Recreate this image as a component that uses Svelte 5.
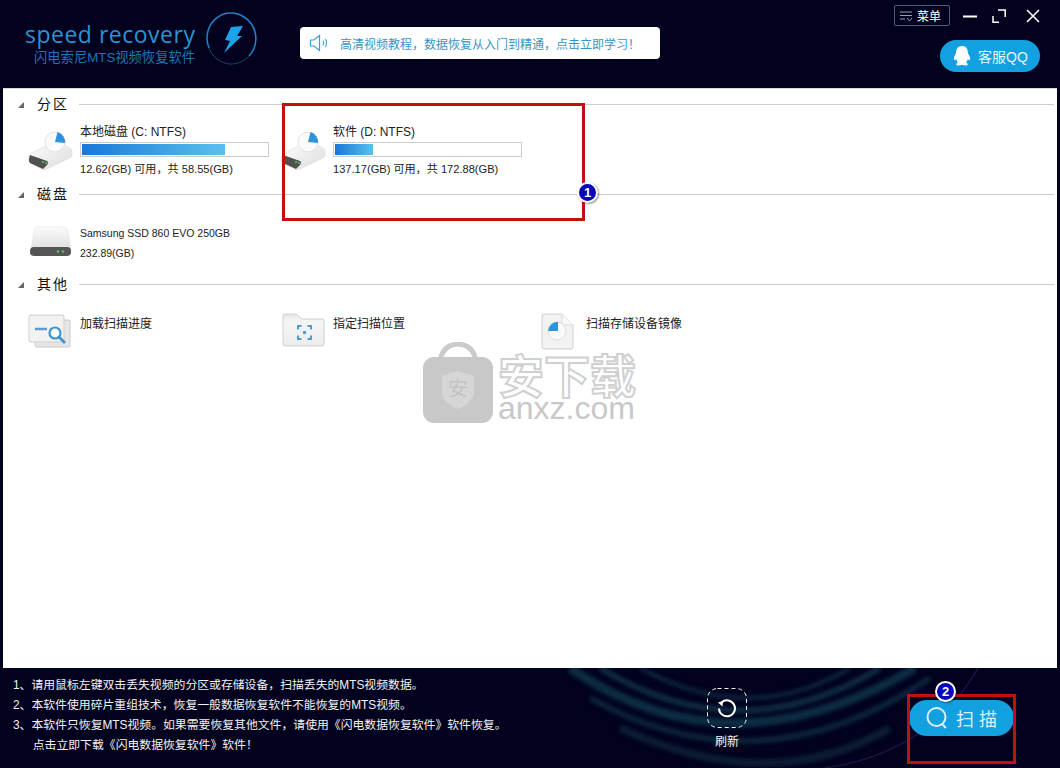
<script>
  // full-width punctuation, as in the original UI
  const comma = "\uFF0C";
  const bang = "\uFF01";
  const volumes = [
    { name: "本地磁盘 (C: NTFS)", used: 77.5, info: `12.62(GB) 可用${comma}共 58.55(GB)` },
    { name: "软件 (D: NTFS)", used: 20.6, info: `137.17(GB) 可用${comma}共 172.88(GB)` },
  ];
  const notes = [
    `1、请用鼠标左键双击丢失视频的分区或存储设备${comma}扫描丢失的MTS视频数据。`,
    `2、本软件使用碎片重组技术${comma}恢复一般数据恢复软件不能恢复的MTS视频。`,
    `3、本软件只恢复MTS视频。如果需要恢复其他文件${comma}请使用《闪电数据恢复软件》软件恢复。`,
    `      点击立即下载《闪电数据恢复软件》软件${bang}`,
  ];
  const tip = `高清视频教程${comma}数据恢复从入门到精通${comma}点击立即学习${bang}`;
</script>

<div class="app">
  <header>
    <div class="logo">
      <div class="brand">
        <div class="word">speed recovery</div>
        <div class="sub">闪电索尼MTS视频恢复软件</div>
      </div>
      <svg class="mark" width="54" height="56" viewBox="0 0 54 56" fill="none">
        <path d="M3 36A24 25 0 0 1 38 5A24 25 0 0 1 43 44" stroke="#1f7fc0" stroke-width="1.600" />
        <path d="M43 44A24 25 0 0 1 3 36" stroke="#24405e" stroke-width="1" />
        <path d="M25 15L37 14L31 24L36 24L18 41L24 29L19 28Z" fill="#1ba3ea" />
      </svg>
    </div>
    <div class="banner">
      <svg width="22" height="18" viewBox="0 0 22 18" fill="none" stroke="#3a9fd0">
        <path d="M1.500 6H5L10.500 1.500V16.500L5 12H1.500Z" stroke-width="1.200" />
        <path d="M14 6.500Q15.500 9 14 11.500M16.500 5Q18.500 9 16.500 13" stroke-width="1.100" />
      </svg>
      <span>{tip}</span>
    </div>
    <div class="right">
      <div class="controls">
        <div class="menu">
          <svg width="15" height="12" viewBox="0 0 15 12" fill="none" stroke="#9a9db0">
            <path d="M1 2H13M1 5.500H13M1 9H6" />
            <path d="M8 8L10.500 11L13 8" />
          </svg>
          <span>菜单</span>
        </div>
        <svg class="min" width="14" height="14" viewBox="0 0 14 14"><path d="M0 7.500H14" stroke="#fff" stroke-width="2" /></svg>
        <svg class="max" width="14" height="14" viewBox="0 0 14 14" fill="none" stroke="#fff" stroke-width="1.500">
          <path d="M6 1H13.200V8M1 7V13.200H7" />
        </svg>
        <svg class="close" width="14" height="14" viewBox="0 0 14 14" stroke="#fff" stroke-width="1.600">
          <path d="M1 1L13 13M13 1L1 13" />
        </svg>
      </div>
      <div class="qq">
        <svg width="20" height="22" viewBox="0 0 20 22">
          <path d="M10 1C5.500 1 4 4.500 4 8.500C2.500 10.500 1.500 13 2 15C3 15.500 3.800 14.500 4.200 14C4.500 15.500 5 16.500 6 17.400C4.500 18 4 19 4.500 20C6 21 8.500 20.500 10 19.800C11.500 20.500 14 21 15.500 20C16 19 15.500 18 14 17.400C15 16.500 15.500 15.500 15.800 14C16.200 14.500 17 15.500 18 15C18.500 13 17.500 10.500 16 8.500C16 4.500 14.500 1 10 1Z" fill="#fff" />
        </svg>
        <span>客服QQ</span>
      </div>
    </div>
  </header>

  <main>
    <section>
      <div class="head"><i></i><h2>分区</h2><hr /></div>
      <div class="row">
        {#each volumes as v}
          <div class="item">
            <svg class="icon" width="48" height="44" viewBox="0 0 48 44">
              <defs>
                <linearGradient id="slab" x1="0" y1="0" x2="1" y2="1">
                  <stop offset="0" stop-color="#ffffff" />
                  <stop offset="1" stop-color="#dcdcdc" />
                </linearGradient>
              </defs>
              <path d="M3 26L26 14Q29 12 32 14L43 20Q45 21 45 23V27Q45 29 43 30L20 41Q17 42 14 41L3 35Q1 34 1 32V29Q1 27 3 26Z" fill="url(#slab)" stroke="#dedede" stroke-width=".6" />
              <path d="M3 27L20 33Q22 34 20 37L16 41L3 35Q1 33 3 27Z" fill="#505050" />
              <circle cx="16" cy="34" r="1" fill="#4fd060" />
              <circle cx="19" cy="35" r="1" fill="#4fd060" />
              <circle cx="28" cy="14" r="10" fill="#fbfbfb" stroke="#e2e2e2" />
              <path d="M28 14L30.500 4A10.500 10.500 0 0 1 38 15Z" fill="#2f93dc" />
            </svg>
            <div class="meta">
              <div class="title">{v.name}</div>
              <div class="bar"><div class="fill" style="width: {v.used}%"></div></div>
              <div class="info">{v.info}</div>
            </div>
          </div>
        {/each}
      </div>
    </section>

    <section>
      <div class="head"><i></i><h2>磁盘</h2><hr /></div>
      <div class="row low">
        <div class="item">
          <svg class="icon icon-low" width="48" height="34" viewBox="0 0 48 34">
            <defs>
              <linearGradient id="box" x1="0" y1="0" x2="0" y2="1">
                <stop offset="0" stop-color="#fbfbfb" />
                <stop offset="1" stop-color="#dedede" />
              </linearGradient>
            </defs>
            <path d="M10 1H36Q40 1 41 5L44 24H4L7 5Q8 1 10 1Z" fill="url(#box)" stroke="#ddd" stroke-width=".5" />
            <rect x="3" y="21" width="41" height="9" rx="4" fill="#555" />
            <circle cx="31" cy="25.500" r="1.200" fill="#4fd060" />
            <circle cx="36" cy="25.500" r="1.200" fill="#4fd060" />
          </svg>
          <div class="meta">
            <div class="line">Samsung SSD 860 EVO 250GB</div>
            <div class="line">232.89(GB)</div>
          </div>
        </div>
      </div>
    </section>

    <section>
      <div class="head"><i></i><h2>其他</h2><hr /></div>
      <div class="row low">
        <div class="item">
          <svg class="icon icon-other" width="48" height="38" viewBox="0 0 48 38">
            <rect x="8" y="7" width="35" height="27" rx="2" fill="#e6e6e6" stroke="#c8c8c8" />
            <rect x="2" y="2" width="35" height="27" rx="2" fill="#f2f2f2" stroke="#cfcfcf" />
            <path d="M8 16H20" stroke="#5b9bd0" stroke-width="2.500" />
            <circle cx="28" cy="20" r="5.500" fill="#fff" stroke="#3f93d0" stroke-width="2.200" />
            <path d="M32 24L38 30" stroke="#3f93d0" stroke-width="2.800" />
          </svg>
          <div class="line">加载扫描进度</div>
        </div>
        <div class="item">
          <svg class="icon icon-other" width="48" height="38" viewBox="0 0 48 38">
            <defs>
              <linearGradient id="folder" x1="0" y1="0" x2="0" y2="1">
                <stop offset="0" stop-color="#e6e6e6" />
                <stop offset=".25" stop-color="#f6f6f6" />
                <stop offset="1" stop-color="#ececec" />
              </linearGradient>
            </defs>
            <path d="M5 1H16L22 6H42Q44 6 44 8V31Q44 33 42 33H5Q3 33 3 31V3Q3 1 5 1Z" fill="url(#folder)" stroke="#cfcfcf" />
            <path d="M18 16.500V13H21.500M27.500 13H31V16.500M31 22.500V26H27.500M21.500 26H18V22.500" fill="none" stroke="#4c9ad6" stroke-width="2" />
            <circle cx="24.500" cy="19.500" r="1.700" fill="#4c9ad6" />
          </svg>
          <div class="line">指定扫描位置</div>
        </div>
        <div class="item">
          <svg class="icon icon-file" width="34" height="38" viewBox="0 0 34 38">
            <path d="M3 1H21L32 12V34Q32 36 30 36H3Q1 36 1 34V3Q1 1 3 1Z" fill="#f2f2f2" stroke="#cfcfcf" />
            <path d="M21 1V12H32" fill="#fafafa" stroke="#dcdcdc" />
            <circle cx="16" cy="18" r="9" fill="#fafafa" stroke="#dcdcdc" />
            <path d="M17 18V9A9.500 9.500 0 0 0 7 18Z" fill="#2f93dc" />
          </svg>
          <div class="line">扫描存储设备镜像</div>
        </div>
      </div>
    </section>

    <div class="mark-wrap">
      <svg width="72" height="82" viewBox="0 0 72 82">
        <path d="M18 20Q20 3 36 2Q52 3 54 20" fill="none" stroke="#cbcbcb" stroke-width="5" />
        <rect x="1" y="15" width="70" height="66" rx="11" fill="#c8c8c8" />
        <path d="M36 29L52 34V50Q52 60 36 67Q20 60 20 50V34Z" fill="#d6d6d6" />
        <text x="36" y="54" text-anchor="middle" class="mark-char">安</text>
      </svg>
      <div class="mark-text">
        <div class="cn">安下载</div>
        <div class="en">anxz.com</div>
      </div>
    </div>
  </main>

  <footer>
    <svg class="swirl" width="1060" height="100" viewBox="0 0 1060 100" fill="none">
      <defs>
        <filter id="soft" x="-10%" y="-50%" width="120%" height="200%"><feGaussianBlur stdDeviation="2" /></filter>
      </defs>
      <g filter="url(#soft)" opacity=".85">
        <path d="M570 0Q730 110 915 0" stroke="#0f3448" stroke-width="9" />
        <path d="M600 0Q740 85 880 0" stroke="#123a50" stroke-width="5" />
        <path d="M640 0Q750 60 850 0" stroke="#0e2f45" stroke-width="4" />
        <path d="M590 30Q760 125 930 10" stroke="#0c2a40" stroke-width="6" />
        <path d="M620 60Q770 130 890 60" stroke="#0a2238" stroke-width="8" />
      </g>
      <path d="M825 100Q930 85 978 0" stroke="#1c1344" stroke-width="1.500" />
    </svg>
    <div class="notes">
      {#each notes as n}
        <div>{n}</div>
      {/each}
    </div>
    <div class="refresh">
      <svg width="40" height="40" viewBox="0 0 40 40" fill="none" stroke="#f2f2f2">
        <rect x=".5" y=".5" width="39" height="39" rx="10" stroke-dasharray="4 3" />
        <path d="M14.500 14.500A8 8 0 1 1 12 20.500" stroke="#fff" stroke-width="2" />
        <path d="M11 14.500L16 13L15.500 18.500Z" fill="#fff" stroke="none" />
      </svg>
      <span>刷新</span>
    </div>
    <button class="scan">
      <svg width="24" height="24" viewBox="0 0 24 24" fill="none" stroke="#d8f2ff" stroke-width="2">
        <circle cx="11.500" cy="11" r="9" />
        <path d="M17 18L21 22" />
      </svg>
      <span>扫 描</span>
    </button>
  </footer>

  <div class="frame one"></div>
  <div class="frame two"></div>
  <div class="badge b1">1</div>
  <div class="badge b2">2</div>
</div>

<style>
  :global(body) {
    background-color: #02021e;
  }
  .app {
    position: relative;
    width: 1060px;
    height: 768px;
    overflow: hidden;
    background-color: #02021e;
    font-family: "Liberation Sans", "Noto Sans CJK SC", sans-serif;
    font-size: 12px;
    color: #222;
  }

  header {
    height: 88px;
    display: flex;
    align-items: flex-start;
  }
  .logo {
    display: flex;
    align-items: flex-start;
    margin-left: 25px;
    width: 235px;
  }
  .brand {
    width: 176px;
    padding-top: 19px;
  }
  .word {
    font-family: "Open Sans", sans-serif;
    font-size: 23px;
    font-weight: 500;
    line-height: 30px;
    letter-spacing: 0.5px;
    white-space: nowrap;
    color: #2c92d4;
  }
  .sub {
    margin: 1px 0 0 9px;
    font-size: 13.300px;
    line-height: 16px;
    white-space: nowrap;
    color: #1f76b4;
  }
  .mark {
    margin: 12px 0 0 5px;
  }
  .banner {
    display: flex;
    align-items: center;
    gap: 9px;
    width: 360px;
    height: 32px;
    margin: 27px 0 0 40px;
    padding-left: 9px;
    box-sizing: border-box;
    background: #fff;
    border-radius: 4px;
    color: #3795c6;
    font-size: 12px;
    white-space: nowrap;
  }
  .right {
    margin-left: auto;
    width: 146px;
    margin-right: 20px;
    display: flex;
    flex-direction: column;
    align-items: flex-end;
    padding-top: 5px;
  }
  .controls {
    width: 146px;
    height: 21px;
    display: flex;
    align-items: center;
  }
  .min {
    margin-left: 13px;
  }
  .max {
    margin-left: 15px;
  }
  .close {
    margin-left: 20px;
  }
  .menu {
    display: flex;
    align-items: center;
    gap: 3px;
    width: 56px;
    height: 21px;
    padding-left: 4px;
    box-sizing: border-box;
    border: 1px solid #555a7a;
    border-radius: 2px;
    color: #fff;
    font-size: 12px;
  }
  .qq {
    display: flex;
    align-items: center;
    gap: 6px;
    width: 100px;
    height: 32px;
    margin-top: 14px;
    padding-left: 12px;
    box-sizing: border-box;
    background: #12a0e0;
    border-radius: 16px;
    color: #e8f6ff;
    font-size: 14px;
    white-space: nowrap;
  }

  main {
    position: relative;
    height: 580px;
    margin: 0 3px;
    background: #fff;
    border-top: 1px solid #d8d8e0;
    box-sizing: border-box;
  }
  section {
    height: 90px;
  }
  .head {
    display: flex;
    align-items: center;
    height: 31px;
  }
  .head i {
    width: 0;
    height: 0;
    margin-left: 15px;
    border-style: solid;
    border-width: 0 0 6px 6px;
    border-color: transparent transparent #666 transparent;
  }
  .head h2 {
    margin: 0 0 4px 13px;
    font-size: 14px;
    font-weight: 400;
    letter-spacing: 2px;
    color: #111;
    white-space: nowrap;
  }
  .head hr {
    flex: 1;
    margin: 0 3px 0 10px;
    border: 0;
    border-top: 1px solid #ccc;
  }
  .row {
    display: grid;
    grid-template-columns: repeat(3, 253px);
    padding-left: 24px;
  }
  .row.low {
    padding-top: 13px;
  }
  .item {
    display: flex;
    align-items: flex-start;
  }
  .icon {
    width: 48px;
    flex: none;
    margin-right: 5px;
    margin-top: 8px;
  }
  .icon-low {
    margin-top: 3px;
  }
  .icon-other {
    margin-top: 0;
  }
  .icon-file {
    width: 34px;
    margin: 0 11px 0 8px;
  }
  .title {
    height: 22px;
    line-height: 24px;
    white-space: nowrap;
  }
  .bar {
    width: 189px;
    height: 15px;
    padding: 1px;
    box-sizing: border-box;
    border: 1px solid #ccc;
    background: #fff;
  }
  .fill {
    height: 100%;
    background: linear-gradient(90deg, #1879d6, #5bc0ee);
  }
  .info {
    margin-top: 3px;
    font-size: 11.100px;
    line-height: 18px;
    white-space: nowrap;
  }
  .line {
    font-size: 12px;
    line-height: 20px;
    white-space: nowrap;
  }
  .item > .line {
    margin-top: 1px;
  }
  .meta .line {
    font-size: 10.500px;
  }
  .mark-wrap {
    position: absolute;
    left: 419px;
    top: 253px;
    display: flex;
    gap: 4px;
  }
  .mark-char {
    font-size: 20px;
    fill: #c4c4c4;
    font-family: "Noto Sans CJK SC", sans-serif;
  }
  .mark-text {
    width: 140px;
    padding-top: 9px;
  }
  .cn {
    font-family: "Noto Sans CJK SC", sans-serif;
    font-size: 46px;
    line-height: 44px;
    font-weight: 700;
    white-space: nowrap;
    color: #fff;
    -webkit-text-stroke: 2px #d0d0d0;
  }
  .en {
    font-family: "Liberation Sans", sans-serif;
    font-size: 32px;
    line-height: 26px;
    color: #c8c8c8;
    white-space: nowrap;
  }

  footer {
    position: relative;
    height: 100px;
    display: flex;
    align-items: flex-start;
    color: #f2f2f2;
  }
  .swirl {
    position: absolute;
    left: 0;
    top: 0;
  }
  .notes {
    position: relative;
    width: 707px;
    box-sizing: border-box;
    padding: 7px 0 0 13px;
    font-size: 11.850px;
    line-height: 20px;
    white-space: pre;
  }
  .refresh {
    position: relative;
    width: 40px;
    margin-top: 20px;
    display: flex;
    flex-direction: column;
    align-items: center;
  }
  .refresh svg {
    display: block;
  }
  .refresh span {
    margin-top: 6px;
    font-size: 12px;
    line-height: 16px;
    white-space: nowrap;
  }
  .scan {
    position: relative;
    display: flex;
    align-items: center;
    gap: 7px;
    width: 105px;
    height: 36px;
    margin: 32px 0 0 162px;
    padding: 0 0 0 16px;
    border: 0;
    border-radius: 18px;
    background: #12a0e0;
    color: #d8f2ff;
    font-family: inherit;
    font-size: 18px;
    white-space: nowrap;
  }

  .frame {
    position: absolute;
    box-sizing: border-box;
    border: 3px solid #c01010;
  }
  .frame.one {
    left: 282px;
    top: 103px;
    width: 303px;
    height: 118px;
  }
  .frame.two {
    left: 907px;
    top: 694px;
    width: 109px;
    height: 70px;
  }
  .badge {
    position: absolute;
    width: 21px;
    height: 21px;
    box-sizing: border-box;
    border: 2px solid #fff;
    border-radius: 50%;
    background: #0808b8;
    color: #fff;
    font-size: 13px;
    font-weight: 700;
    line-height: 17px;
    text-align: center;
    box-shadow: 1px 1px 2px rgba(0, 0, 0, 0.45);
  }
  .b1 {
    left: 577px;
    top: 182px;
  }
  .b2 {
    left: 935px;
    top: 681px;
  }
</style>
